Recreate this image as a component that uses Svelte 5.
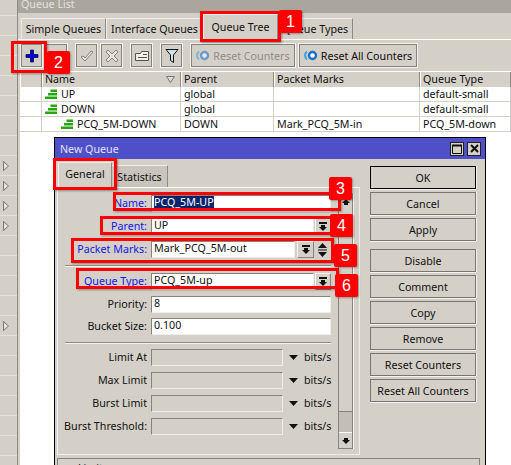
<script>
  const strip = Array.from({ length: 24 }, (_, i) => i);
  const arrows = [8, 9, 10, 11, 16];
  const rows = [
    { name: 'UP', parent: 'global', marks: '', type: 'default-small', child: false },
    { name: 'DOWN', parent: 'global', marks: '', type: 'default-small', child: false },
    { name: 'PCQ_5M-DOWN', parent: 'DOWN', marks: 'Mark_PCQ_5M-in', type: 'PCQ_5M-down', child: true }
  ];
  const limits = ['Limit At', 'Max Limit', 'Burst Limit', 'Burst Threshold:'];
  const actions = [['OK', 'Cancel', 'Apply'], ['Disable', 'Comment', 'Copy', 'Remove', 'Reset Counters', 'Reset All Counters']];
</script>

{#snippet spin()}
  <svg width="14" height="11" viewBox="0 0 14 11"><path d="M3 1.500A5 5 0 0 0 3 9.500" fill="none" stroke="#3aa0e8" stroke-width="2"/><circle cx="8.500" cy="5.500" r="3.500" fill="#fff" stroke="#1a70c8" stroke-width="2.400"/></svg>
{/snippet}

{#snippet dropArrow()}
  <svg width="10" height="10" viewBox="0 0 10 10"><path d="M1 0h8v2H1ZM3 3h4v2h2L5 9 1 5h2Z" fill="#111"/></svg>
{/snippet}

<div class="screen">
  <aside class="strip">
    {#each strip as i}
      <div class="strip-row">
        {#if arrows.includes(i)}<svg width="6" height="10" viewBox="0 0 6 10"><path d="M.5.5 5.500 5 .5 9.500Z" fill="#e6e3dc" stroke="#77756f"/></svg>{/if}
      </div>
    {/each}
  </aside>

  <main class="list">
    <header class="list-title">Queue List</header>
    <nav class="tabs">
      <span class="tab t1">Simple Queues</span>
      <span class="tab t2">Interface Queues</span>
      <span class="tab t3 active">Queue Tree</span>
      <span class="tab t4">Queue Types</span>
    </nav>
    <div class="toolbar">
      <button class="tool"><svg width="14" height="14" viewBox="0 0 14 14"><path d="M5.500 1h3v4.500H13v3H8.500V13h-3V8.500H1v-3h4.500Z" fill="#0000e0" stroke="#000030" stroke-width=".7"/></svg></button>
      <button class="tool"></button>
      <button class="tool wide-gap"><svg width="16" height="14" viewBox="0 0 16 14"><path d="M2 8l4 4 8-9-2-1-6 7-2-2Z" fill="#e8e5de" stroke="#85837c"/></svg></button>
      <button class="tool"><svg width="14" height="14" viewBox="0 0 14 14"><path d="M1 3l2-2 4 4 4-4 2 2-4 4 4 4-2 2-4-4-4 4-2-2 4-4Z" fill="#e8e5de" stroke="#85837c"/></svg></button>
      <button class="tool wide-gap"><svg width="16" height="14" viewBox="0 0 16 14"><path d="M1.500 4.500h5l1-2h7v9h-13Z" fill="#f2f0ec" stroke="#55534e"/><path d="M9 5.500h4M4 8.500h9" stroke="#55534e"/></svg></button>
      <button class="tool wide-gap"><svg width="14" height="16" viewBox="0 0 14 16"><path d="M1 1.500h12L8.500 7v7.500l-3-2V7Z" fill="#cfe0ec" stroke="#111"/></svg></button>
      <button class="tool text disabled wide-gap rc">{@render spin()}Reset Counters</button>
      <button class="tool text rac">{@render spin()}Reset All Counters</button>
    </div>
    <div class="table">
      <div class="row head">
        <div class="c0"></div><div class="c1">Name<svg class="sort" width="9" height="7" viewBox="0 0 9 7"><path d="M.5.500h8L4.500 6.500Z" fill="#dedbd4" stroke="#77756f"/></svg></div><div class="c2">Parent</div><div class="c3">Packet Marks</div><div class="c4">Queue Type</div>
      </div>
      {#each rows as r}
        <div class="row">
          <div class="c0"></div>
          <div class="c1" class:child={r.child}>
            <svg width="12" height="11" viewBox="0 0 12 11"><path d="M5.500.500H12v2.500H5.500ZM3 4h9v2.500H3ZM0 7.500h12V10H0Z" fill="#23a80e"/></svg>{r.name}
          </div>
          <div class="c2">{r.parent}</div><div class="c3">{r.marks}</div><div class="c4">{r.type}</div>
        </div>
      {/each}
    </div>
  </main>

  <section class="dialog">
    <header class="dlg-title">
      <span>New Queue</span>
      <span class="win-btns">
        <span class="win-btn"><svg width="10" height="10" viewBox="0 0 10 10"><path d="M.5 1.500h9v8h-9Z" fill="none" stroke="#111"/><path d="M0 1.500h10" stroke="#111" stroke-width="2"/></svg></span>
        <span class="win-btn"><svg width="9" height="9" viewBox="0 0 9 9"><path d="M1 1l7 7M8 1 1 8" stroke="#111" stroke-width="2"/></svg></span>
      </span>
    </header>
    <div class="dlg-body">
      <div class="left">
        <div class="dlg-tabs">
          <span class="dtab on">General</span>
          <span class="dtab">Statistics</span>
        </div>
        <div class="panel">
          <div class="form">
            <div class="f name"><label class="blue" for="n">Name:</label><div class="input" id="n"><span class="sel">PCQ_5M-UP</span></div></div>
            <div class="f"><label class="blue" for="p">Parent:</label><div class="input" id="p">UP</div><span class="dd">{@render dropArrow()}</span></div>
            <div class="f marks"><label class="blue" for="m">Packet Marks:</label><div class="input" id="m">Mark_PCQ_5M-out</div><span class="dd">{@render dropArrow()}</span><span class="updown"><svg width="11" height="14" viewBox="0 0 11 14"><path d="M5.500 0 10 5H1ZM1 6.500h9v1H1ZM1 9h9l-4.500 5Z" fill="#111"/></svg></span></div>
            <hr />
            <div class="f"><label class="blue" for="q">Queue Type:</label><div class="input" id="q">PCQ_5M-up</div><span class="dd">{@render dropArrow()}</span></div>
            <div class="f"><label for="pr">Priority:</label><div class="input" id="pr">8</div></div>
            <div class="f bucket"><label for="b">Bucket Size:</label><div class="input" id="b">0.100</div></div>
            <hr class="h2" />
            {#each limits as l}
              <div class="f"><label for={l}>{l}</label><div class="input off" id={l}></div><svg class="caret" width="9" height="5" viewBox="0 0 9 5"><path d="M0 0h9L4.500 5Z" fill="#111"/></svg><span class="unit">bits/s</span></div>
            {/each}
          </div>
          <div class="scroll">
            <span class="sb"><svg width="8" height="8" viewBox="0 0 8 8"><path d="M4 1 8 5H6v2H2V5H0Z" fill="#111"/></svg></span>
            <span class="track"></span>
            <span class="thumb"></span>
            <span class="sb"><svg width="8" height="8" viewBox="0 0 8 8"><path d="M4 7 8 3H6V1H2v2H0Z" fill="#111"/></svg></span>
          </div>
        </div>
      </div>
      <div class="side">
        {#each actions as group, g}
          <div class="group">
            {#each group as a, i}<button class="act" class:def={g === 0 && i === 0}>{a}</button>{/each}
          </div>
        {/each}
      </div>
    </div>
    <div class="under"><span>Limits</span></div>
  </section>

  <i class="mark" style="left:200px;top:11px;width:81px;height:31px"></i>
  <i class="mark" style="left:11px;top:41px;width:36px;height:32px"></i>
  <i class="mark" style="left:53px;top:158px;width:64px;height:32px"></i>
  <i class="mark" style="left:113px;top:192px;width:228px;height:19px"></i>
  <i class="mark" style="left:100px;top:216px;width:234px;height:19px"></i>
  <i class="mark" style="left:71px;top:238px;width:263px;height:25px"></i>
  <i class="mark" style="left:76px;top:268px;width:263px;height:21px"></i>

  <b class="badge" style="left:279px;top:10px">1</b>
  <b class="badge" style="left:47px;top:51px">2</b>
  <b class="badge" style="left:329px;top:177px">3</b>
  <b class="badge" style="left:330px;top:214px">4</b>
  <b class="badge" style="left:334px;top:244px">5</b>
  <b class="badge" style="left:335px;top:274px">6</b>
</div>

<style>
  :global(body) { margin: 0; }
  .screen { position: relative; width: 511px; height: 465px; overflow: hidden; display: flex; background: #fff; font: 10.7px/14px "Noto Sans", sans-serif; color: #111; }
  svg { display: block; flex: none; }

  .strip { width: 17px; flex: none; background: #d4d0c8; }
  .strip-row { height: 19px; border-bottom: 1px solid #e5e2dc; display: flex; align-items: center; padding-left: 3px; }
  .strip-row:first-child { height: 15px; }

  .list { flex: 1; min-width: 0; display: flex; flex-direction: column; border-left: 1px solid #8d8b84; }
  .list-title { height: 13px; background: #aaa69e; color: #e4e2dd; padding-left: 3px; line-height: 8px; overflow: hidden; }
  .tabs { height: 27px; box-sizing: border-box; display: flex; align-items: flex-end; background: #d4d0c8; border-bottom: 1px solid #fff; padding-left: 3px; }
  .tab { height: 21px; line-height: 21px; text-align: center; border-top: 1px solid #eee; border-left: 1px solid #eee; border-right: 1px solid #8d8b84; box-sizing: border-box; white-space: nowrap; }
  .t1 { width: 85px; } .t2 { width: 97px; } .t3 { width: 75px; } .t4 { width: 75px; }
  .tab.active { height: 26px; line-height: 24px; margin-bottom: -1px; background: #d4d0c8; position: relative; }
  .toolbar { height: 31px; box-sizing: border-box; background: #d4d0c8; display: flex; align-items: flex-start; padding: 4px 0 0 3px; }
  button { font: inherit; color: inherit; padding: 0; margin: 0; background: #d4d0c8; box-sizing: border-box; border: 1px solid #85837c; box-shadow: 0 0 0 1px #f4f3f0; }
  .tool { width: 21px; height: 23px; margin-right: 4px; display: flex; align-items: center; justify-content: center; flex: none; }
  .wide-gap { margin-left: 5px; }
  .tool.text { gap: 3px; }
  .rc { width: 104px; }
  .tool.rac { width: 118px; margin-right: 0; }
  .disabled { color: #8f8d87; }
  .disabled svg { opacity: .55; }

  .table { flex: 1; background: #fff; border-left: 2px solid #d4d0c8; }
  .row { display: flex; height: 15px; line-height: 14px; border-bottom: 1px solid #d4d0c8; box-sizing: border-box; white-space: nowrap; }
  .row.head { height: 16px; line-height: 15px; background: #d4d0c8; border-bottom: 0; border-top: 1px solid #fff; }
  .row > div { box-sizing: border-box; padding-left: 3px; border-right: 1px solid #d4d0c8; overflow: hidden; flex: none; }
  .head > div { border-right: 1px solid #8d8b84; box-shadow: inset 1px 0 #fff; }
  .c0 { width: 22px; }
  .c1 { width: 139px; display: flex; align-items: center; gap: 4px; position: relative; }
  .c1.child { padding-left: 19px !important; }
  .c2 { width: 93px; }
  .c3 { width: 146px; }
  .row > .c4 { flex: 1; }
  .sort { position: absolute; right: 5px; top: 4px; }

  .dialog { position: absolute; left: 54px; top: 137px; width: 432px; height: 340px; box-sizing: border-box; border: 1px solid #000; background: #d4d0c8; }
  .dlg-title { height: 21px; background: #4f50c8; color: #e0e0f8; display: flex; justify-content: space-between; align-items: center; padding: 0 4px 0 5px; }
  .win-btns { display: flex; gap: 3px; }
  .win-btn { width: 14px; height: 14px; background: #d4d0c8; border: 1px solid #222; box-sizing: border-box; display: flex; align-items: center; justify-content: center; }
  .dlg-body { display: flex; }
  .left { width: 305px; flex: none; padding-left: 2px; padding-top: 3px; box-sizing: border-box; }
  .dlg-tabs { display: flex; align-items: flex-end; height: 25px; padding-left: 1px; }
  .dtab { height: 22px; width: 56px; line-height: 22px; text-align: center; box-sizing: border-box; border-top: 1px solid #eee; border-right: 1px solid #8d8b84; background: #c9c5bd; }
  .dtab.on { height: 25px; width: 54px; line-height: 23px; background: #d4d0c8; border-left: 1px solid #eee; }
  .panel { height: 268px; box-sizing: border-box; border-left: 1px solid #efede9; border-top: 1px solid #fff; border-right: 1px solid #efede9; border-bottom: 1px solid #efede9; display: flex; }
  .form { width: 273px; flex: none; }
  .f { display: flex; align-items: center; height: 17px; margin-top: 6px; }
  .f label { width: 93px; flex: none; text-align: right; padding: 0 4px 2px 0; box-sizing: border-box; white-space: nowrap; }
  .blue { color: #1616e6; }
  .name { margin-top: 7px; }
  .input { height: 17px; line-height: 13px; flex: 1; min-width: 0; box-sizing: border-box; background: #fff; border: 1px solid #85837c; border-right-color: #efede9; border-bottom-color: #efede9; padding-left: 2px; white-space: nowrap; overflow: hidden; }
  .input.off { background: #d4d0c8; flex: none; width: 132px; }
  .sel { background: #0a246a; color: #fff; }
  .dd { width: 16px; height: 17px; margin-left: 1px; flex: none; display: flex; align-items: center; justify-content: center; border: 1px solid #f4f3f0; border-right-color: #85837c; border-bottom-color: #85837c; box-sizing: border-box; }
  .marks .dd { margin-left: 2px; width: 17px; }
  .updown { width: 17px; flex: none; display: flex; justify-content: center; }
  hr { border: 0; border-top: 1px solid #8d8b84; border-bottom: 1px solid #f4f3f0; margin: 7px 0 0 7px; height: 0; box-sizing: content-box; }
  .bucket { margin-top: 5px; }
  .h2 { margin-bottom: -1px; }
  .caret { margin-left: 6px; }
  .unit { margin-left: 6px; white-space: nowrap; padding-bottom: 2px; }
  .scroll { width: 15px; margin-left: 7px; height: 256px; margin-top: 5px; display: flex; flex-direction: column; border: 1px solid #85837c; border-top: 0; box-sizing: border-box; box-shadow: 1px 0 #f4f3f0; }
  .sb { height: 15px; flex: none; display: flex; align-items: center; justify-content: center; background: #d4d0c8; border-top: 1px solid #fff; }
  .track { flex: 1; background: #d4d0c8; }
  .thumb { height: 20px; background: #c3bfb8; flex: none; border-top: 1px solid #85837c; }
  .side { width: 106px; margin-left: 10px; padding-top: 7px; display: flex; flex-direction: column; gap: 8px; }
  .group { display: flex; flex-direction: column; gap: 3px; }
  .act { height: 23px; width: 106px; flex: none; white-space: nowrap; box-shadow: 0 1px #f4f3f0, 1px 0 #f4f3f0; border-color: #77756f; }
  .act.def { border-color: #000; }
  .under { position: absolute; left: 2px; top: 320px; width: 423px; height: 20px; box-sizing: border-box; border: 1px solid #85837c; padding-left: 20px; }
  .under span { position: relative; top: 2px; }

  .mark { position: absolute; box-sizing: border-box; border: 3px solid #f00; box-shadow: 1px 1px 2px rgba(0,0,0,.35); }
  .badge { position: absolute; width: 23px; height: 23px; border-radius: 2px; background: #f00; color: #fff; font: 400 16px/23px "Liberation Sans", sans-serif; text-align: center; box-shadow: 1px 1px 2px rgba(0,0,0,.3); }
</style>
